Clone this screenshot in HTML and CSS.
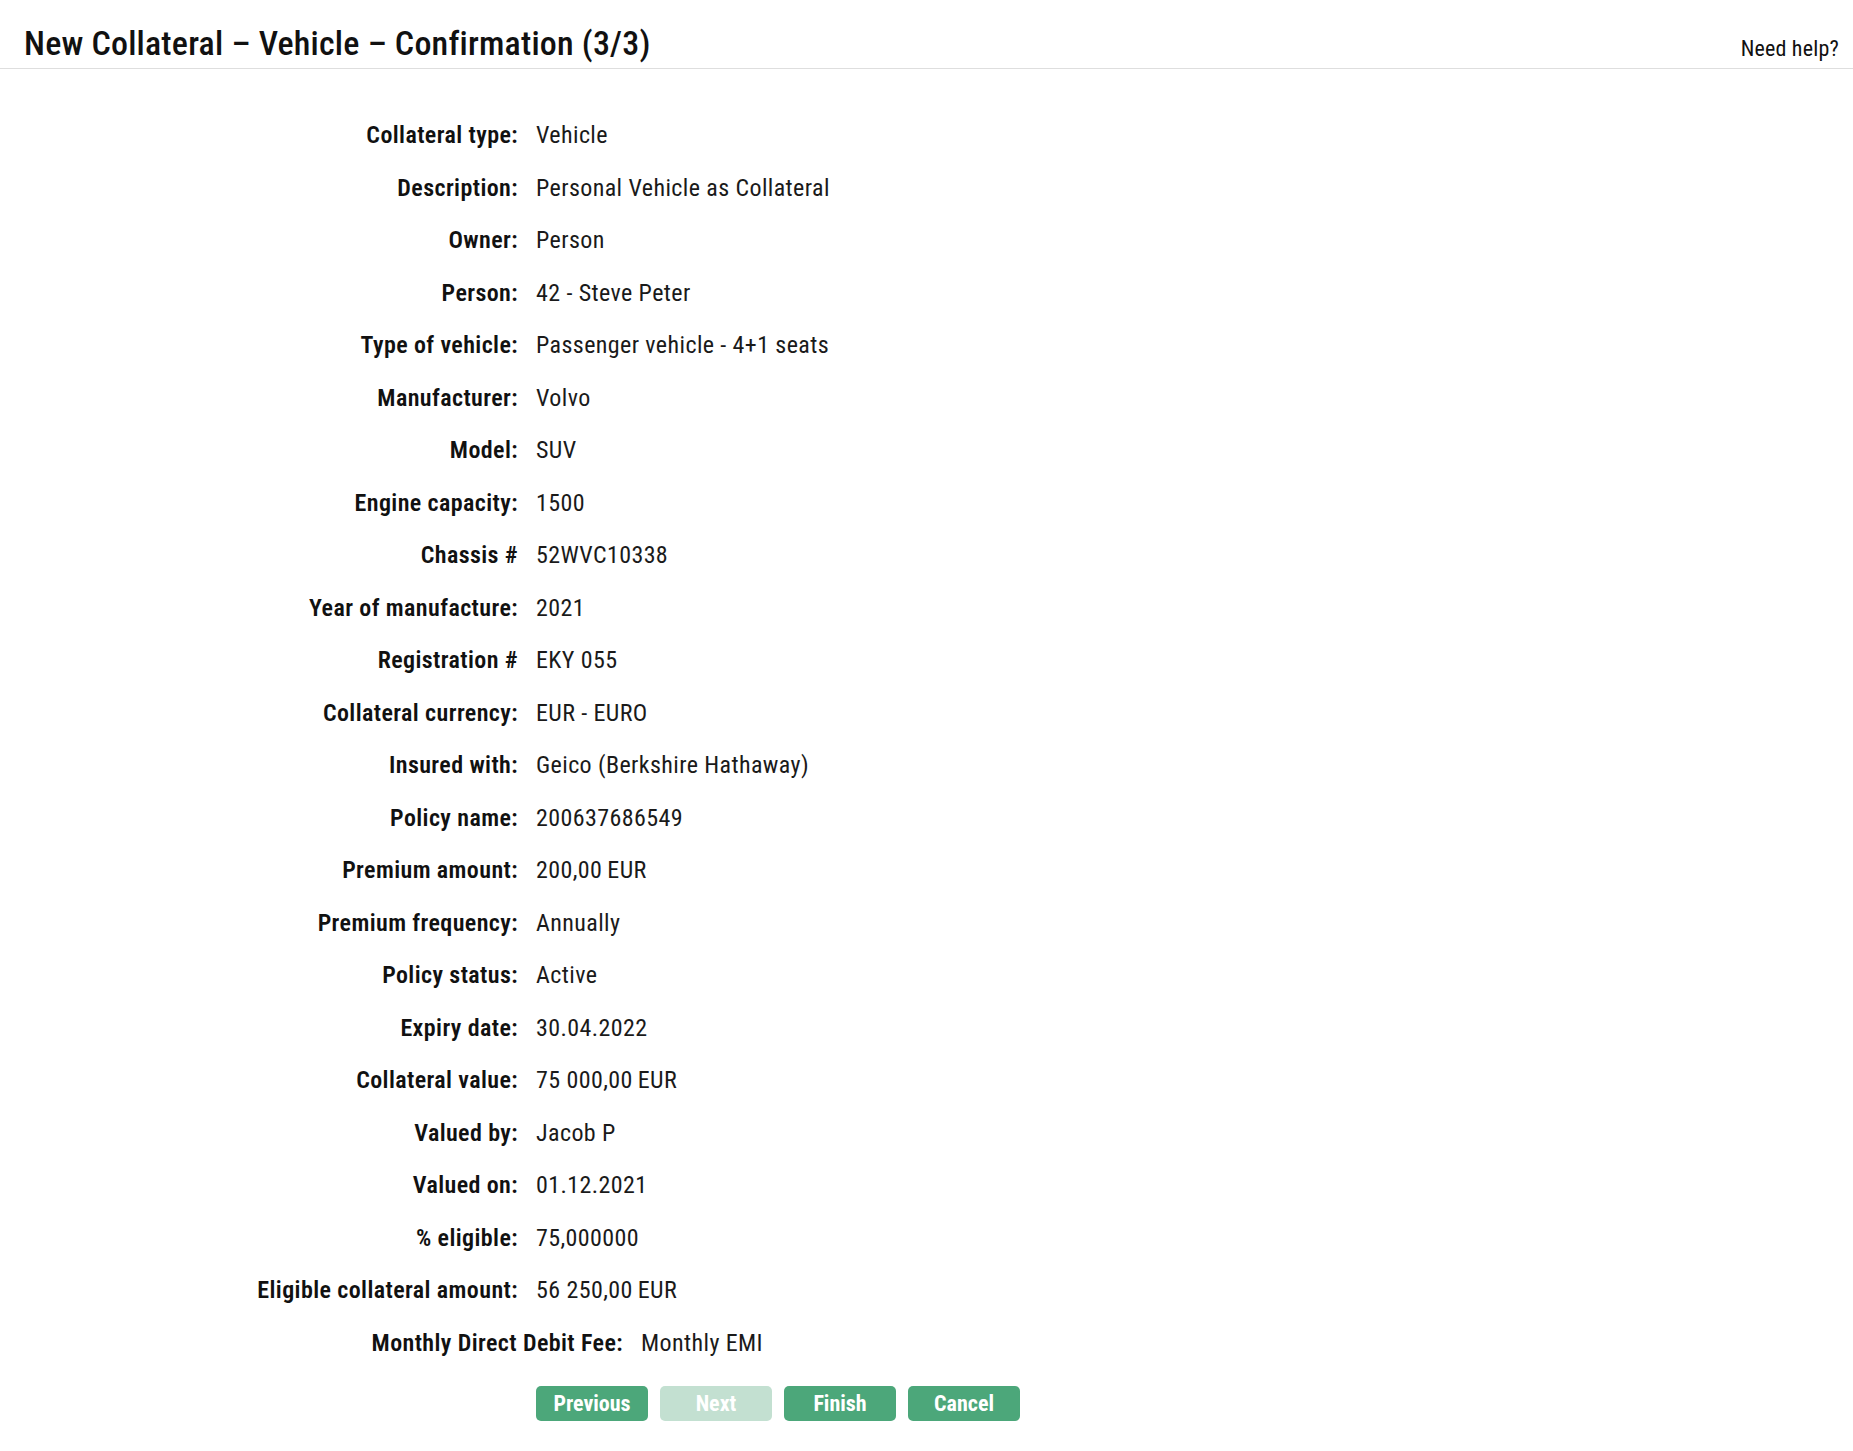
FILE: index.html
```html
<!DOCTYPE html>
<html lang="en">
<head>
<meta charset="utf-8">
<title>New Collateral – Vehicle – Confirmation (3/3)</title>
<link rel="stylesheet" href="styles.css">
</head>
<body>
<header class="page-header">
  <h1 class="page-title">New Collateral – Vehicle – Confirmation (3/3)</h1>
  <a class="help-link" href="#">Need help?</a>
</header>
<main class="content">
  <dl class="details">
    <div class="row"><dt class="label">Collateral type:</dt><dd class="value">Vehicle</dd></div>
    <div class="row"><dt class="label">Description:</dt><dd class="value">Personal Vehicle as Collateral</dd></div>
    <div class="row"><dt class="label">Owner:</dt><dd class="value">Person</dd></div>
    <div class="row"><dt class="label">Person:</dt><dd class="value">42 - Steve Peter</dd></div>
    <div class="row"><dt class="label">Type of vehicle:</dt><dd class="value">Passenger vehicle - 4+1 seats</dd></div>
    <div class="row"><dt class="label">Manufacturer:</dt><dd class="value">Volvo</dd></div>
    <div class="row"><dt class="label">Model:</dt><dd class="value">SUV</dd></div>
    <div class="row"><dt class="label">Engine capacity:</dt><dd class="value">1500</dd></div>
    <div class="row"><dt class="label">Chassis #</dt><dd class="value">52WVC10338</dd></div>
    <div class="row"><dt class="label">Year of manufacture:</dt><dd class="value">2021</dd></div>
    <div class="row"><dt class="label">Registration #</dt><dd class="value">EKY 055</dd></div>
    <div class="row"><dt class="label">Collateral currency:</dt><dd class="value">EUR - EURO</dd></div>
    <div class="row"><dt class="label">Insured with:</dt><dd class="value">Geico (Berkshire Hathaway)</dd></div>
    <div class="row"><dt class="label">Policy name:</dt><dd class="value">200637686549</dd></div>
    <div class="row"><dt class="label">Premium amount:</dt><dd class="value">200,00&#8201;EUR</dd></div>
    <div class="row"><dt class="label">Premium frequency:</dt><dd class="value">Annually</dd></div>
    <div class="row"><dt class="label">Policy status:</dt><dd class="value">Active</dd></div>
    <div class="row"><dt class="label">Expiry date:</dt><dd class="value">30.04.2022</dd></div>
    <div class="row"><dt class="label">Collateral value:</dt><dd class="value">75 000,00&#8201;EUR</dd></div>
    <div class="row"><dt class="label">Valued by:</dt><dd class="value">Jacob P</dd></div>
    <div class="row"><dt class="label">Valued on:</dt><dd class="value">01.12.2021</dd></div>
    <div class="row"><dt class="label">% eligible:</dt><dd class="value">75,000000</dd></div>
    <div class="row"><dt class="label">Eligible collateral amount:</dt><dd class="value">56 250,00&#8201;EUR</dd></div>
    <div class="row row--wide"><dt class="label">Monthly Direct Debit Fee:</dt><dd class="value">Monthly EMI</dd></div>
  </dl>
  <div class="actions">
    <button class="btn" type="button">Previous</button>
    <button class="btn btn--disabled" type="button" disabled>Next</button>
    <button class="btn" type="button">Finish</button>
    <button class="btn" type="button">Cancel</button>
  </div>
</main>
</body>
</html>
```
FILE: styles.css
```css
* { box-sizing: border-box; }

body {
  margin: 0;
  font-family: "Roboto Condensed", "Open Sans", sans-serif;
  color: #141414;
  background: #fff;
}

.page-header {
  display: flex;
  align-items: flex-end;
  justify-content: space-between;
  height: 69px;
  padding: 0 14px 5px 24px;
  border-bottom: 1px solid #dedede;
}

.page-title {
  margin: 0;
  font-size: 34px;
  font-weight: 500;
  letter-spacing: 0.2px;
  line-height: 40px;
  color: #111;
}

.help-link {
  font-size: 22px;
  letter-spacing: 0.2px;
  line-height: 28px;
  color: #111;
  text-decoration: none;
}

.content {
  padding-top: 40px;
}

.details {
  margin: 0;
}

.row {
  display: flex;
  gap: 18px;
  font-size: 24px;
  letter-spacing: 0.4px;
  line-height: 52.5px;
  height: 52.5px;
}

.label {
  width: 518px;
  flex: none;
  text-align: right;
  font-weight: 600;
  color: #111;
}

.row--wide .label {
  width: 623px;
}

.value {
  margin: 0;
  color: #1a1a1a;
}

.actions {
  display: flex;
  gap: 12px;
  margin-top: 17px;
  padding-left: 536px;
}

.btn {
  width: 112px;
  height: 35px;
  border: none;
  border-radius: 5px;
  background: #4ca77a;
  color: #fff;
  font-family: inherit;
  font-size: 22px;
  font-weight: 700;
  padding: 0;
  cursor: pointer;
}

.btn--disabled {
  background: #c3e0d1;
  cursor: default;
}
```
